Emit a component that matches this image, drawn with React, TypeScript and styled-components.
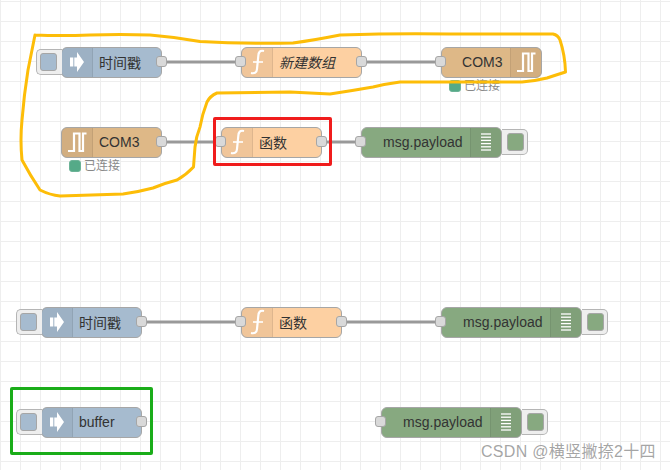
import React from 'react';
import styled, { createGlobalStyle } from 'styled-components';

type Kind = 'inject' | 'func' | 'serialIn' | 'serialOut' | 'debug';

interface FlowNode {
  kind: Kind;
  label: string;
  x: number;
  y: number;
  w: number;
  italic?: boolean;
  status?: string;
}

const fills: Record<Kind, string> = {
  inject: '#a6bbcf',
  func: '#fdd0a2',
  serialIn: '#deb887',
  serialOut: '#deb887',
  debug: '#87a980',
};

const nodes: FlowNode[] = [
  { kind: 'inject', label: '时间戳', x: 61, y: 47, w: 100 },
  { kind: 'func', label: '新建数组', x: 241, y: 47, w: 120, italic: true },
  { kind: 'serialOut', label: 'COM3', x: 441, y: 47, w: 100, status: '已连接' },
  { kind: 'serialIn', label: 'COM3', x: 61, y: 127, w: 100, status: '已连接' },
  { kind: 'func', label: '函数', x: 221, y: 127, w: 100 },
  { kind: 'debug', label: 'msg.payload', x: 361, y: 127, w: 140 },
  { kind: 'inject', label: '时间戳', x: 41, y: 307, w: 100 },
  { kind: 'func', label: '函数', x: 241, y: 307, w: 100 },
  { kind: 'debug', label: 'msg.payload', x: 441, y: 307, w: 140 },
  { kind: 'inject', label: 'buffer', x: 41, y: 407, w: 100 },
  { kind: 'debug', label: 'msg.payload', x: 381, y: 407, w: 140 },
];

const wires = [
  [161, 241, 62],
  [361, 441, 62],
  [161, 221, 142],
  [321, 361, 142],
  [141, 241, 322],
  [341, 441, 322],
];

const lasso =
  'M35 35 Q60 36 90 35 Q120 34 150 35 Q175 37 200 41.5 Q245 44 293 43 Q315 40 340 35 Q400 33 450 34 L553 34 Q558 35 560 40 Q565 55 565.5 72 ' +
  'Q556 75 547 78 Q535 81 522 82 L400 82 Q385 84 373 87 Q350 91 330 94 L290 92 L217 93 Q210 96 207 102 Q202 115 200 127 Q196 137 195 147 L193.5 167 ' +
  'Q186 175 177 180 Q165 183 153 188 Q138 192 123 194 L60 196 Q50 195 40 190 Q30 175 22 160 Q20 140 22 120 Q24 95 28 70 L35 35';

const GlobalStyle = createGlobalStyle`
  html, body {
    margin: 0;
    padding: 0;
    background: #fff;
  }
`;

const Canvas = styled.div`
  position: relative;
  width: 670px;
  height: 470px;
  overflow: hidden;
  background-color: #fff;
  background-image: linear-gradient(#eee 1px, transparent 1px), linear-gradient(90deg, #eee 1px, transparent 1px);
  background-size: 20px 20px;
  background-position: 0 1px, 0 0;
  font-family: 'Liberation Sans', 'Noto Sans CJK SC', sans-serif;
`;

const Layer = styled.svg`
  position: absolute;
  left: 0;
  top: 0;
`;

const Shell = styled.div<{ $x: number; $y: number; $w: number; $fill: string; $flip: boolean }>`
  position: absolute;
  left: ${(p) => p.$x - 0.5}px;
  top: ${(p) => p.$y - 0.5}px;
  width: ${(p) => p.$w + 1}px;
  height: 31px;
  box-sizing: border-box;
  display: flex;
  flex-direction: ${(p) => (p.$flip ? 'row-reverse' : 'row')};
  align-items: stretch;
  background: ${(p) => p.$fill};
  border: 1.5px solid #a6a6a6;
  border-radius: 6px;
`;

const IconCell = styled.div<{ $flip: boolean }>`
  flex: 0 0 29px;
  box-sizing: border-box;
  display: flex;
  align-items: center;
  justify-content: center;
  background: rgba(0, 0, 0, 0.05);
  border-${(p) => (p.$flip ? 'left' : 'right')}: 1px solid rgba(0, 0, 0, 0.08);
  border-radius: ${(p) => (p.$flip ? '0 4px 4px 0' : '4px 0 0 4px')};
`;

const Label = styled.div<{ $flip: boolean; $italic?: boolean }>`
  flex: 1;
  display: flex;
  align-items: center;
  justify-content: ${(p) => (p.$flip ? 'flex-end' : 'flex-start')};
  padding: 0 ${(p) => (p.$flip ? 7 : 6.5)}px 1px;
  font-size: 14px;
  font-style: ${(p) => (p.$italic ? 'italic' : 'normal')};
  color: #333;
  white-space: nowrap;
`;

const Port = styled.div<{ $side: 'in' | 'out' }>`
  position: absolute;
  top: 8.5px;
  ${(p) => (p.$side === 'in' ? 'left: -6.5px;' : 'right: -6.5px;')}
  width: 11px;
  height: 11px;
  box-sizing: border-box;
  background: #d9d9d9;
  border: 1px solid #a6a6a6;
  border-radius: 3px;
`;

const SideButton = styled.div<{ $side: 'left' | 'right' }>`
  position: absolute;
  top: 1px;
  ${(p) => (p.$side === 'left' ? 'left: -26px; border-right: none; border-radius: 5px 0 0 5px;' : 'right: -27px; border-left: none; border-radius: 0 5px 5px 0;')}
  width: 26px;
  height: 26px;
  box-sizing: border-box;
  display: flex;
  align-items: center;
  justify-content: ${(p) => (p.$side === 'left' ? 'flex-start' : 'flex-end')};
  padding: 0 3px;
  background: #eee;
  border-top: 1px solid #b5b5b5;
  border-bottom: 1px solid #b5b5b5;
  ${(p) => (p.$side === 'left' ? 'border-left: 1px solid #b5b5b5;' : 'border-right: 1px solid #b5b5b5;')}
`;

const ButtonFace = styled.div<{ $fill: string }>`
  width: 17px;
  height: 18px;
  box-sizing: border-box;
  background: ${(p) => p.$fill};
  border: 1px solid #a6a6a6;
  border-radius: 3px;
`;

const Status = styled.div`
  position: absolute;
  left: 7.5px;
  top: 31.5px;
  display: flex;
  align-items: center;
  gap: 3px;
  font-size: 12px;
  line-height: 14px;
  color: #888;
  white-space: nowrap;
`;

const StatusDot = styled.span`
  width: 12px;
  height: 12px;
  box-sizing: border-box;
  background: #5a8;
  border: 1px solid #6cb397;
  border-radius: 3px;
`;

const Highlight = styled.div<{ $x: number; $y: number; $w: number; $h: number; $color: string }>`
  position: absolute;
  left: ${(p) => p.$x}px;
  top: ${(p) => p.$y}px;
  width: ${(p) => p.$w}px;
  height: ${(p) => p.$h}px;
  box-sizing: border-box;
  border: 3px solid ${(p) => p.$color};
  border-radius: 2px;
`;

const Watermark = styled.div`
  position: absolute;
  left: 481px;
  top: 442px;
  font-size: 16px;
  line-height: 20px;
  letter-spacing: 0.3px;
  color: rgba(130, 130, 130, 0.72);
  text-shadow: 0 0 1px rgba(255, 255, 255, 0.8);
  white-space: nowrap;
`;

const IconSvg = styled.svg`
  flex: 0 0 30px;
  width: 30px;
  height: 30px;
`;

const KindIcon: React.FC<{ kind: Kind }> = ({ kind }) => {
  if (kind === 'inject') {
    return (
      <IconSvg viewBox="0 0 30 30">
        <path d="M8 10.5H11.3V19.5H8zM12.3 10.5H15V5L22 15L15 25V19.5H12.3z" fill="#fff" />
      </IconSvg>
    );
  }
  if (kind === 'func') {
    return (
      <IconSvg viewBox="0 0 30 30">
        <path d="M22 4C18 3 16.5 5 16.3 9L15 22C14.8 25.5 12.5 26.8 9 26" fill="none" stroke="#fff" strokeWidth="2.2" />
        <path d="M11 15H21" stroke="#fff" strokeWidth="1.6" />
      </IconSvg>
    );
  }
  if (kind === 'debug') {
    return (
      <IconSvg viewBox="0 0 30 30">
        {[7, 10.2, 13.4, 16.6, 19.8, 23].map((y) => (
          <path key={y} d={`M10 ${y}H20`} stroke="#fff" strokeWidth="1.3" />
        ))}
      </IconSvg>
    );
  }
  return (
    <IconSvg viewBox="0 0 30 30">
      <path d="M6 24H12V6.5H17.5V24H21V6.5H24.5" fill="none" stroke="#fff" strokeWidth="2.2" />
    </IconSvg>
  );
};

const Node: React.FC<{ node: FlowNode }> = ({ node }) => {
  const { kind, label, x, y, w, italic, status } = node;
  const fill = fills[kind];
  const flip = kind === 'serialOut' || kind === 'debug';
  const hasIn = kind === 'func' || kind === 'serialOut' || kind === 'debug';
  const hasOut = kind === 'func' || kind === 'serialIn' || kind === 'inject';

  return (
    <Shell $x={x} $y={y} $w={w} $fill={fill} $flip={flip}>
      <IconCell $flip={flip}>
        <KindIcon kind={kind} />
      </IconCell>
      <Label $flip={flip} $italic={italic}>
        {label}
      </Label>
      {hasIn && <Port $side="in" />}
      {hasOut && <Port $side="out" />}
      {kind === 'inject' && (
        <SideButton $side="left">
          <ButtonFace $fill={fill} />
        </SideButton>
      )}
      {kind === 'debug' && (
        <SideButton $side="right">
          <ButtonFace $fill={fill} />
        </SideButton>
      )}
      {status && (
        <Status>
          <StatusDot />
          {status}
        </Status>
      )}
    </Shell>
  );
};

const App: React.FC = () => {
  return (
    <Canvas>
      <GlobalStyle />
      <Layer width="670" height="470">
        {wires.map(([from, to, y]) => (
          <path key={`${from}-${y}`} d={`M${from} ${y}H${to}`} stroke="#999" strokeWidth="3" />
        ))}
      </Layer>
      {nodes.map((node) => (
        <Node key={`${node.label}-${node.x}-${node.y}`} node={node} />
      ))}
      <Layer width="670" height="470">
        <path d={lasso} fill="none" stroke="#fdbd08" strokeWidth="3" strokeLinejoin="round" strokeLinecap="round" />
      </Layer>
      <Highlight $x={213} $y={117} $w={119} $h={49} $color="#f01c1c" />
      <Highlight $x={10} $y={387} $w={143} $h={68} $color="#1aad19" />
      <Watermark>CSDN @横竖撇捺2十四</Watermark>
    </Canvas>
  );
};

export default App;
